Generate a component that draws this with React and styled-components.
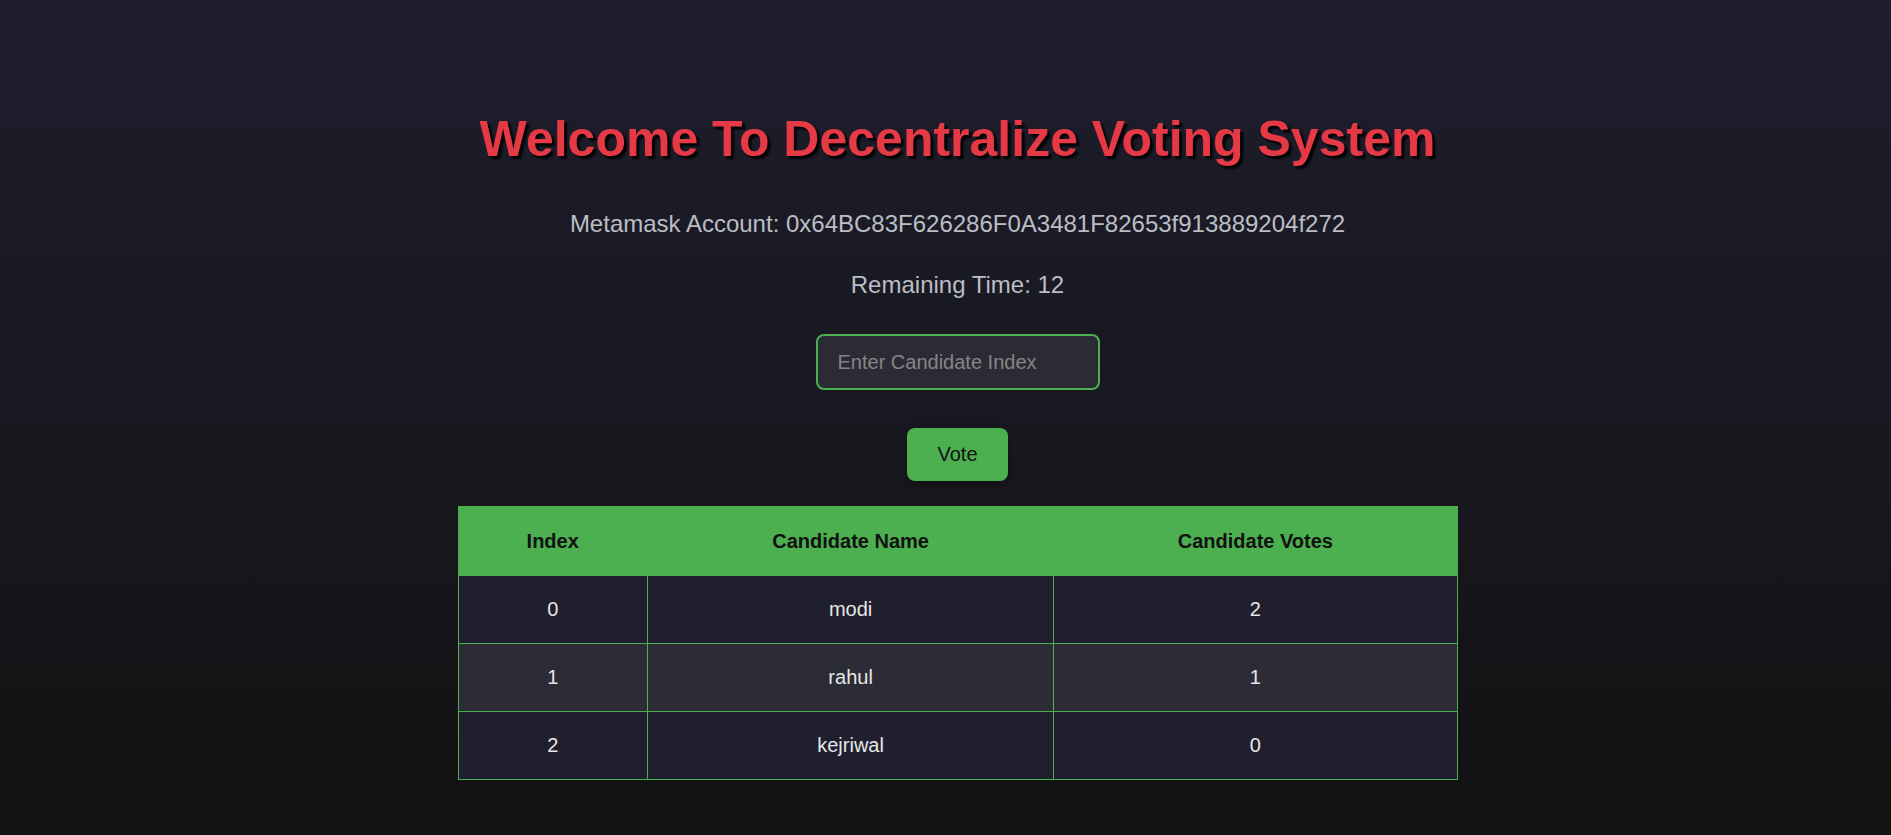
import React from "react";
import styled, { createGlobalStyle } from "styled-components";

const GlobalStyle = createGlobalStyle`
  html, body {
    margin: 0;
    padding: 0;
  }
  body {
    font-family: "Liberation Sans", Arial, sans-serif;
    background: #121212;
  }
  * { box-sizing: border-box; }
`;

const Page = styled.div`
  min-height: 100vh;
  background: linear-gradient(180deg, #1e1e2e 0%, #121212 100%);
  display: flex;
  flex-direction: column;
  align-items: center;
  padding: 110px 0 40px 24px;
  color: #bdbdbd;
`;

const Title = styled.h1`
  margin: 0 0 42px;
  font-size: 50px;
  font-weight: 700;
  line-height: normal;
  color: #e63946;
  text-shadow: 3px 3px 2px rgba(0, 0, 0, 0.9);
`;

const Info = styled.p`
  margin: 0 0 ${(p) => p.$gap}px;
  font-size: 24px;
  line-height: normal;
  color: #bdbdc4;
`;

const Input = styled.input`
  width: 284px;
  height: 56px;
  margin: 0 0 38px;
  padding: 0 20px;
  border: 2px solid #4caf50;
  border-radius: 8px;
  background: #2b2b35;
  color: #e0e0e0;
  font-family: "Liberation Sans", Arial, sans-serif;
  font-size: 20px;
  outline: none;
  &::placeholder {
    color: #858585;
  }
`;

const Button = styled.button`
  margin: 0 0 25px;
  padding: 15px 30px;
  border: none;
  border-radius: 8px;
  background: #4caf50;
  color: #111;
  font-family: "Liberation Sans", Arial, sans-serif;
  font-size: 20px;
  line-height: normal;
  cursor: pointer;
  box-shadow: 0 4px 8px rgba(0, 0, 0, 0.3);
`;

const Table = styled.table`
  width: 1000px;
  border-collapse: collapse;
  border: 1px solid #4caf50;
  font-size: 20px;
`;

const HeadCell = styled.th`
  padding: 22.5px 19px;
  background: #4caf50;
  color: #111;
  font-weight: 700;
  line-height: 23px;
  border: 1px solid #4caf50;
  text-align: center;
`;

const Row = styled.tr`
  background: ${(p) => (p.$alt ? "#2c2c36" : "#1f1f2f")};
`;

const Cell = styled.td`
  padding: 22px 19px;
  color: #e6e6e6;
  line-height: 23px;
  border: 1px solid #4caf50;
  text-align: center;
`;

const candidates = [
  { index: 0, name: "modi", votes: 2 },
  { index: 1, name: "rahul", votes: 1 },
  { index: 2, name: "kejriwal", votes: 0 },
];

export default function App() {
  return (
    <>
      <GlobalStyle />
      <Page>
        <Title>Welcome To Decentralize Voting System</Title>
        <Info $gap={33}>
          Metamask Account: 0x64BC83F626286F0A3481F82653f913889204f272
        </Info>
        <Info $gap={35}>Remaining Time: 12</Info>
        <Input type="number" placeholder="Enter Candidate Index" />
        <Button>Vote</Button>
        <Table>
          <thead>
            <tr>
              <HeadCell>Index</HeadCell>
              <HeadCell>Candidate Name</HeadCell>
              <HeadCell>Candidate Votes</HeadCell>
            </tr>
          </thead>
          <tbody>
            {candidates.map((c, i) => (
              <Row key={c.index} $alt={i % 2 === 1}>
                <Cell>{c.index}</Cell>
                <Cell>{c.name}</Cell>
                <Cell>{c.votes}</Cell>
              </Row>
            ))}
          </tbody>
        </Table>
      </Page>
    </>
  );
}
